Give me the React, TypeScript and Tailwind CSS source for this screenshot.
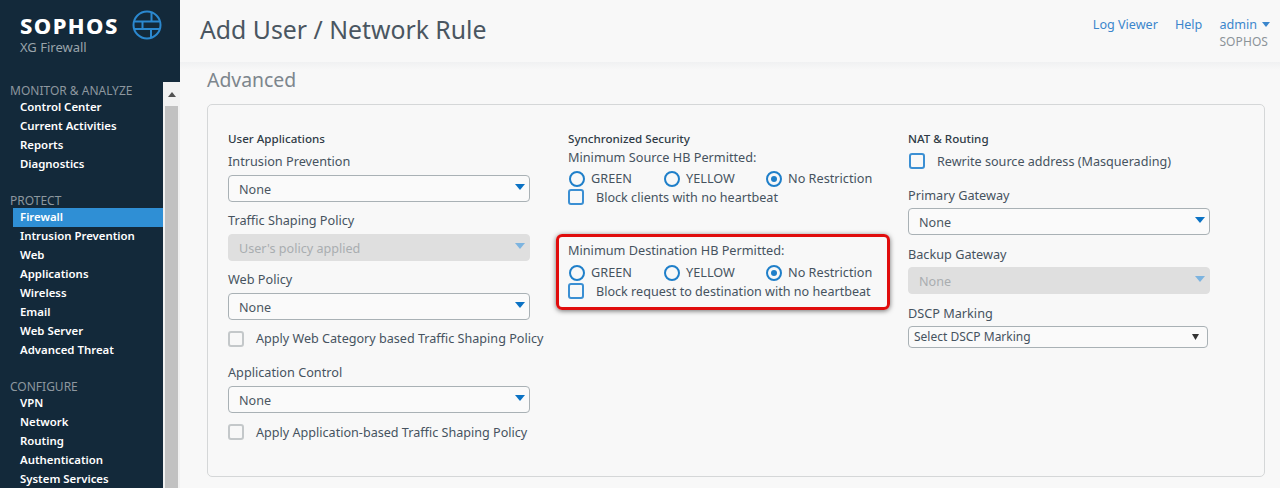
import React from "react";

const font = { fontFamily: '"Noto Sans", sans-serif' };

function NavGroup({ title, items, active }: { title: string; items: string[]; active?: string }) {
  return (
    <div className="mb-[18px]">
      <div className="h-[16px] pl-[10px] text-[12px] leading-[18px] text-[#8d979f]">{title}</div>
      {items.map((i) => (
        <div
          key={i}
          className={
            "ml-[13px] h-[19px] pl-[7px] text-[11.4px] font-semibold leading-[18px] text-white " +
            (i === active ? "bg-[#2f8fd5]" : "")
          }
        >
          {i}
        </div>
      ))}
    </div>
  );
}

function Select({ value, disabled }: { value: string; disabled?: boolean }) {
  return (
    <div
      className={
        "flex h-[27px] w-[302px] items-center justify-between rounded-[4px] border pl-[10px] pr-[4px] text-[12.6px] " +
        (disabled
          ? "border-[#dfdfdf] bg-[#dfdfdf] text-[#a9adb0]"
          : "border-[#a9b1b5] bg-[#fafafa] text-[#4a5661]")
      }
    >
      <span className="pt-[4px]">{value}</span>
      <svg width="10" height="6" viewBox="0 0 10 6" className="mb-[3px]">
        <path d="M0 0h10L5 6z" fill={disabled ? "#7db4e0" : "#0b72c4"} />
      </svg>
    </div>
  );
}

function Label({ children, className = "" }: { children: React.ReactNode; className?: string }) {
  return <div className={"h-[19px] text-[12.7px] leading-[19px] text-[#46535f] " + className}>{children}</div>;
}

function Heading({ children }: { children: React.ReactNode }) {
  return <div className="h-[19px] text-[11.6px] font-medium leading-[17px] text-[#2f3b46]">{children}</div>;
}

function Check({
  label,
  tone = "blue",
  gap = "w-[28px]",
  box = "",
  text = "",
}: {
  label: string;
  tone?: "blue" | "gray";
  gap?: string;
  box?: string;
  text?: string;
}) {
  return (
    <div className="flex h-[19px] items-center text-[12.6px] text-[#46535f]">
      <div className={gap + " -mt-[2px] shrink-0"}>
        <div
          className={
            "h-[16px] w-[16px] rounded-[3px] border-2 " + box + " " + (tone === "blue" ? "border-[#3b8fd3]" : "border-[#c4c8ca]")
          }
        />
      </div>
      <span className={text}>{label}</span>
    </div>
  );
}

function Radio({ label, on, w }: { label: string; on?: boolean; w: string }) {
  return (
    <div className={"flex h-[19px] items-center text-[12.7px] text-[#46535f] " + w}>
      <div className="mr-[6px] flex h-[16px] w-[16px] shrink-0 items-center justify-center rounded-full border-2 border-[#1f7fc9]">
        {on && <div className="h-[6px] w-[6px] rounded-full bg-[#1f7fc9]" />}
      </div>
      <span>{label}</span>
    </div>
  );
}

function RadioRow() {
  return (
    <div className="flex pl-[1px]">
      <Radio label="GREEN" w="w-[95px]" />
      <Radio label="YELLOW" w="w-[102px]" />
      <Radio label="No Restriction" on w="w-[120px]" />
    </div>
  );
}

function Logo() {
  return (
    <svg width="30" height="30" viewBox="0 0 30 30" fill="none" stroke="#2b88cf" strokeWidth="2">
      <circle cx="15" cy="15" r="13.5" />
      <path d="M2.5 11.5h25M2 19h26M10.5 11.5V19M19.5 2V11.5M19 19v9" />
    </svg>
  );
}

export default function App() {
  return (
    <div style={font} className="flex h-[488px] w-[1280px] overflow-hidden bg-[#f8f8f8]">
      <aside className="flex h-full w-[180px] shrink-0 flex-col bg-[#13293a]">
        <div className="h-[82px] shrink-0 pl-[20px] pt-[10px]">
          <div className="flex h-[30px] items-center">
            <span className="w-[112px] text-[22px] font-extrabold leading-[30px] tracking-[1.4px] text-white">SOPHOS</span>
            <Logo />
          </div>
          <div className="-mt-[2px] text-[13px] leading-[18px] text-[#9aa4ab]">XG Firewall</div>
        </div>
        <div className="flex min-h-0 flex-1">
          <nav className="w-[163px] shrink-0 overflow-hidden">
            <NavGroup title="MONITOR & ANALYZE" items={["Control Center", "Current Activities", "Reports", "Diagnostics"]} />
            <NavGroup
              title="PROTECT"
              active="Firewall"
              items={["Firewall", "Intrusion Prevention", "Web", "Applications", "Wireless", "Email", "Web Server", "Advanced Threat"]}
            />
            <NavGroup title="CONFIGURE" items={["VPN", "Network", "Routing", "Authentication", "System Services"]} />
          </nav>
          <div className="flex w-[17px] shrink-0 flex-col bg-[#f1f1f1]">
            <div className="flex h-[24px] shrink-0 items-center justify-center">
              <svg width="8" height="5" viewBox="0 0 8 5">
                <path d="M0 5L4 0l4 5z" fill="#505050" />
              </svg>
            </div>
            <div className="mx-[2px] flex-1 bg-[#c1c1c1]" />
          </div>
        </div>
      </aside>

      <main className="relative min-w-0 flex-1">
        <header className="flex h-[62px] items-start justify-between pl-[20px] pr-[10px]">
          <h1 className="pt-[11px] text-[24.8px] leading-[36px] text-[#4a5661]">Add User / Network Rule</h1>
          <div className="flex gap-[17px] pt-[15px] text-[12.6px] leading-[19px] text-[#3b86cc]">
            <span>Log Viewer</span>
            <span>Help</span>
            <div>
              <div className="flex items-center gap-[5px]">
                admin
                <svg width="8" height="5" viewBox="0 0 8 5">
                  <path d="M0 0h8L4 5z" fill="#3b86cc" />
                </svg>
              </div>
              <div className="text-[12px] leading-[16px] tracking-[0.1px] text-[#8c9398]">SOPHOS</div>
            </div>
          </div>
        </header>
        <div className="h-[8px] bg-gradient-to-b from-[#f0f1f2] to-[#f8f8f8]" />
        <div className="pl-[27px] pr-[15px]">
          <div className="h-[34px] text-[19.4px] leading-[20px] text-[#7d868d]">Advanced</div>
          <section className="grid h-[373px] grid-cols-[340px_340px_1fr] rounded-[5px] border border-[#d5d7d8] pl-[20px] pt-[25px]">
            <div>
              <Heading>User Applications</Heading>
              <Label className="mt-[3px] mb-[4px]">Intrusion Prevention</Label>
              <Select value="None" />
              <Label className="mt-[9px] mb-[4px]">Traffic Shaping Policy</Label>
              <Select value="User's policy applied" disabled />
              <Label className="mt-[9px] mb-[4px]">Web Policy</Label>
              <Select value="None" />
              <div className="mt-[10px]">
                <Check label="Apply Web Category based Traffic Shaping Policy" tone="gray" />
              </div>
              <Label className="mt-[14px] mb-[4px]">Application Control</Label>
              <Select value="None" />
              <div className="mt-[10px]">
                <Check label="Apply Application-based Traffic Shaping Policy" tone="gray" text="pt-[2px]" />
              </div>
            </div>
            <div>
              <Heading>Synchronized Security</Heading>
              <Label className="-mt-[1px] mb-[2px]">Minimum Source HB Permitted:</Label>
              <RadioRow />
              <Check label="Block clients with no heartbeat" text="pt-[2px]" />
              <Label className="mt-[34px] mb-[3px]">Minimum Destination HB Permitted:</Label>
              <RadioRow />
              <Check label="Block request to destination with no heartbeat" text="pt-[2px]" />
            </div>
            <div>
              <Heading>NAT &amp; Routing</Heading>
              <div className="mt-[3px]">
                <Check label="Rewrite source address (Masquerading)" gap="w-[29px]" box="ml-[1px]" text="pt-[2px]" />
              </div>
              <Label className="mt-[15px] mb-[3px]">Primary Gateway</Label>
              <Select value="None" />
              <Label className="mt-[10px] mb-[3px]">Backup Gateway</Label>
              <Select value="None" disabled />
              <Label className="mt-[10px] mb-[3px]">DSCP Marking</Label>
              <div className="flex h-[22px] w-[300px] items-center justify-between rounded-[4px] border border-[#a9b1b5] bg-[#fafafa] pl-[5px] pr-[8px] text-[12px] text-[#46535f]">
                <span>Select DSCP Marking</span>
                <svg width="7" height="6" viewBox="0 0 7 6">
                  <path d="M0 0h7L3.5 6z" fill="#333" />
                </svg>
              </div>
            </div>
          </section>
        </div>
        <div className="absolute left-[376px] top-[234px] h-[76px] w-[334px] rounded-[6px] border-[3px] border-[#e00c0c] shadow-[0_1px_5px_rgba(0,0,0,0.55)]" />
      </main>
    </div>
  );
}
